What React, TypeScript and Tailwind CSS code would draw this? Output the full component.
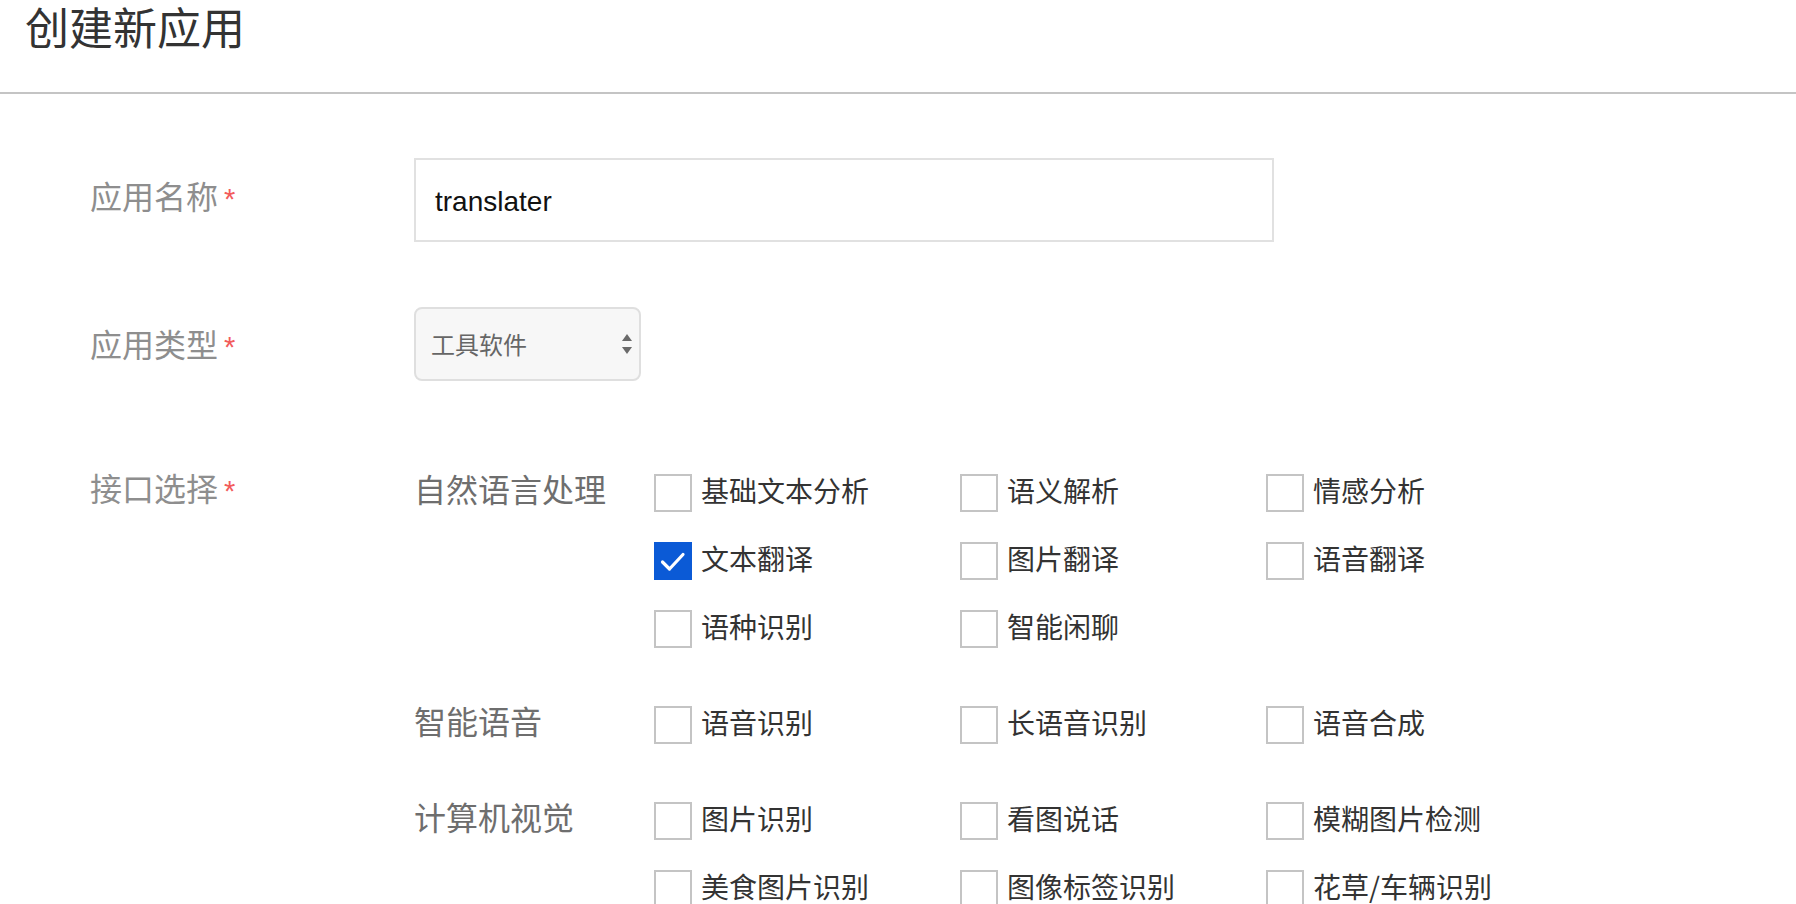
import React from "react";

const CJK = "font-['Noto_Sans_CJK_SC','Noto_Sans',sans-serif]";

function Box({ checked }: { checked?: boolean }) {
  if (checked) {
    return (
      <div className="w-[38px] h-[38px] shrink-0 bg-[#0b5ad6]">
        <svg width="38" height="38" viewBox="0 0 38 38">
          <path d="M8.5 20 L15.5 27 L29 12.5" fill="none" stroke="#ffffff" strokeWidth="3.2" strokeLinecap="round" strokeLinejoin="round" />
        </svg>
      </div>
    );
  }
  return <div className="w-[38px] h-[38px] shrink-0 border-2 border-[#c4c4c4] bg-white" />;
}

function Item({ label, checked }: { label: string; checked?: boolean }) {
  return (
    <div className="flex items-start">
      <Box checked={checked} />
      <span className="ml-[9px] text-[28px] leading-[32px] text-[#333333] whitespace-nowrap">{label}</span>
    </div>
  );
}

const categories: { name: string; items: { label: string; checked?: boolean }[] }[] = [
  {
    name: "自然语言处理",
    items: [
      { label: "基础文本分析" },
      { label: "语义解析" },
      { label: "情感分析" },
      { label: "文本翻译", checked: true },
      { label: "图片翻译" },
      { label: "语音翻译" },
      { label: "语种识别" },
      { label: "智能闲聊" },
    ],
  },
  {
    name: "智能语音",
    items: [{ label: "语音识别" }, { label: "长语音识别" }, { label: "语音合成" }],
  },
  {
    name: "计算机视觉",
    items: [
      { label: "图片识别" },
      { label: "看图说话" },
      { label: "模糊图片检测" },
      { label: "美食图片识别" },
      { label: "图像标签识别" },
      { label: "花草/车辆识别" },
    ],
  },
];

function Label({ text }: { text: string }) {
  return (
    <div className="w-[324px] shrink-0 flex items-baseline text-[32px] leading-[40px] text-[#8e8e8e]">
      <span>{text}</span>
      <span className="ml-[6px] font-['Liberation_Sans',Arial,sans-serif] text-[29px] text-[#f25b5b]">*</span>
    </div>
  );
}

export default function App() {
  return (
    <div className={`w-full h-[904px] overflow-hidden bg-white ${CJK}`}>
      <header className="h-[92px] pl-[25px]">
        <h1 className="text-[44px] leading-[52px] text-[#333333] font-normal">创建新应用</h1>
      </header>
      <div className="h-[2px] bg-[#c4c4c4]" />

      <div className="pl-[90px]">
        {/* Row 1 */}
        <div className="flex items-start mt-[64px]">
          <div className="pt-[17px]">
            <Label text="应用名称" />
          </div>
          <div className="w-[860px] h-[84px] border-2 border-[#e1e1e1] flex items-center pl-[19px] pt-[4px]">
            <span className="font-['Liberation_Sans',Arial,sans-serif] text-[28px] text-[#111111]">translater</span>
          </div>
        </div>

        {/* Row 2 */}
        <div className="flex items-start mt-[65px]">
          <div className="pt-[16px]">
            <Label text="应用类型" />
          </div>
          <div className="w-[227px] h-[74px] rounded-[8px] border-2 border-[#dfdfdf] bg-[#f7f7f7] flex items-center justify-between pl-[15px] pr-[7px]">
            <span className="text-[24px] text-[#666666]">工具软件</span>
            <svg width="10" height="20" viewBox="0 0 10 20">
              <path d="M5 0 L10 7 L0 7 Z" fill="#6a6a6a" />
              <path d="M0 13 L10 13 L5 20 Z" fill="#6a6a6a" />
            </svg>
          </div>
        </div>

        {/* Row 3 */}
        <div className="flex items-start mt-[93px]">
          <div className="-mt-[7px]">
            <Label text="接口选择" />
          </div>
          <div className="flex flex-col gap-[58px]">
            {categories.map((c) => (
              <div key={c.name} className="flex items-start">
                <div className="w-[240px] shrink-0 -mt-[6px] text-[32px] leading-[40px] text-[#6e6e6e]">{c.name}</div>
                <div className="grid grid-cols-[306px_306px_306px] gap-y-[30px]">
                  {c.items.map((it) => (
                    <Item key={it.label} label={it.label} checked={it.checked} />
                  ))}
                </div>
              </div>
            ))}
          </div>
        </div>
      </div>
    </div>
  );
}
